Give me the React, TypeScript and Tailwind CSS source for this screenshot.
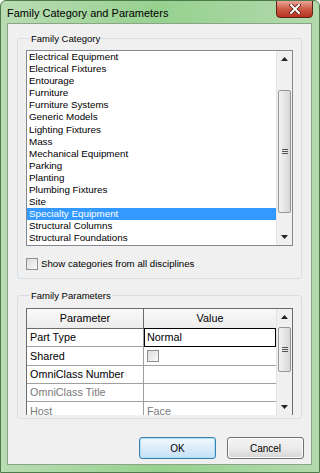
import React from 'react';

const categories = [
  'Electrical Equipment',
  'Electrical Fixtures',
  'Entourage',
  'Furniture',
  'Furniture Systems',
  'Generic Models',
  'Lighting Fixtures',
  'Mass',
  'Mechanical Equipment',
  'Parking',
  'Planting',
  'Plumbing Fixtures',
  'Site',
  'Specialty Equipment',
  'Structural Columns',
  'Structural Foundations',
];

const Arrow = ({ up }: { up?: boolean }) => (
  <svg width="7" height="4" viewBox="0 0 7 4">
    {up ? <path d="M0 4 L3.5 0 L7 4 Z" fill="#222" /> : <path d="M0 0 L3.5 4 L7 0 Z" fill="#222" />}
  </svg>
);

const Grip = () => (
  <div className="flex flex-col gap-[1px] items-center">
    <div className="w-[6px] h-[1px] bg-[#555]" />
    <div className="w-[6px] h-[1px] bg-[#555]" />
    <div className="w-[6px] h-[1px] bg-[#555]" />
  </div>
);

// vertical scrollbar, thumb placed by flex spacers
const ScrollBar = ({ before, thumb }: { before: number; thumb: number }) => (
  <div className="w-[16px] h-full flex flex-col bg-[#f0f0f0] border-l border-[#e3e3e3] shrink-0">
    <div className="h-[16px] flex items-center justify-center shrink-0">
      <Arrow up />
    </div>
    <div className="shrink-0" style={{ height: before }} />
    <div
      className="shrink-0 mx-[1px] rounded-[2px] border border-[#979797] bg-gradient-to-r from-[#f4f4f4] to-[#d6d6d6] flex items-center justify-center"
      style={{ height: thumb }}
    >
      <Grip />
    </div>
    <div className="flex-1" />
    <div className="h-[16px] flex items-center justify-center shrink-0">
      <Arrow />
    </div>
  </div>
);

const Checkbox = () => (
  <div className="w-[12px] h-[12px] border border-[#8f8f8f] bg-gradient-to-br from-[#dcdcdc] to-[#fafafa] shrink-0" />
);

export default function App() {
  return (
    <div
      className="w-[320px] h-[473px] flex flex-col border border-[#4d7a4a] rounded-t-[6px] overflow-hidden bg-gradient-to-r from-[#b9dcb3] via-[#96d18f] to-[#b3d9ad]"
      style={{ fontFamily: '"Liberation Sans", Arial, sans-serif' }}
    >
      {/* title bar */}
      <div className="h-[22px] relative flex items-center pl-[6px] pt-[2px] shrink-0">
        <span className="text-[11px] text-black leading-none">Family Category and Parameters</span>
        <div className="absolute right-[6px] top-[-1px] w-[37px] h-[18px] rounded-b-[4px] border border-[#5e241c] bg-gradient-to-b from-[#e8a597] via-[#cc5a45] to-[#b6321f] flex items-center justify-center">
          <svg width="12" height="10" viewBox="0 0 12 10">
            <path d="M2 1 L10 9 M10 1 L2 9" stroke="#5a1b13" strokeWidth="3.6" strokeLinecap="square" />
            <path d="M2 1 L10 9 M10 1 L2 9" stroke="#ffffff" strokeWidth="2" strokeLinecap="square" />
          </svg>
        </div>
      </div>

      {/* client area */}
      <div className="flex-1 ml-[6px] mr-[7px] mb-[7px] border border-[#8aa487] bg-[#f0f0f0] flex flex-col text-black">
        <fieldset className="mx-[9px] mt-[9px] h-[246px] border border-[#d5dfe5] rounded-[3px] px-[8px] pb-[8px] flex flex-col">
          <legend className="ml-[4px] px-[1px] text-[9.5px] leading-[11px]">Family Category</legend>
          <div className="mt-[6px] h-[196px] border border-[#828790] bg-white flex shrink-0">
            <div className="flex-1 pt-[0px] overflow-hidden">
              {categories.map((c) => (
                <div
                  key={c}
                  className={
                    'h-[12.1px] leading-[12px] pl-[2px] text-[9.8px] whitespace-nowrap ' +
                    (c === 'Specialty Equipment' ? 'bg-[#3399ff] text-white' : '')
                  }
                >
                  {c}
                </div>
              ))}
            </div>
            <ScrollBar before={23} thumb={123} />
          </div>
          <div className="flex items-center gap-[3px] mt-[11px]">
            <Checkbox />
            <span className="text-[9.7px]">Show categories from all disciplines</span>
          </div>
        </fieldset>

        <fieldset className="mx-[9px] mt-[11px] h-[129px] border border-[#d5dfe5] rounded-[3px] px-[8px] flex flex-col">
          <legend className="ml-[4px] px-[1px] text-[9.5px] leading-[11px]">Family Parameters</legend>
          <div className="mt-[7px] h-[107px] border border-[#6b6b6b] border-b-0 bg-white flex overflow-hidden">
            <div className="flex-1 flex flex-col text-[10.8px]">
              <div className="h-[20px] flex shrink-0 bg-gradient-to-b from-[#fafafa] to-[#ececec] border-b border-[#6b6b6b]">
                <div className="w-[117px] border-r border-[#6b6b6b] flex items-center justify-center">Parameter</div>
                <div className="flex-1 flex items-center justify-center">Value</div>
              </div>
              <div className="h-[18px] flex shrink-0 border-b border-[#a0a0a0]">
                <div className="w-[117px] border-r border-[#a0a0a0] flex items-center pl-[3px]">Part Type</div>
                <div className="flex-1 border border-black -mt-[1px] -mb-[1px] flex items-center pl-[2px]">Normal</div>
              </div>
              <div className="h-[19px] flex shrink-0 border-b border-[#a0a0a0]">
                <div className="w-[117px] border-r border-[#a0a0a0] flex items-center pl-[3px]">Shared</div>
                <div className="flex-1 flex items-center pl-[3px]">
                  <Checkbox />
                </div>
              </div>
              <div className="h-[18px] flex shrink-0 border-b border-[#a0a0a0]">
                <div className="w-[117px] border-r border-[#a0a0a0] flex items-center pl-[3px]">OmniClass Number</div>
                <div className="flex-1" />
              </div>
              <div className="h-[18px] flex shrink-0 border-b border-[#a0a0a0] text-[#7a7a7a]">
                <div className="w-[117px] border-r border-[#a0a0a0] flex items-center pl-[3px]">OmniClass Title</div>
                <div className="flex-1" />
              </div>
              <div className="h-[18px] flex shrink-0 text-[#7a7a7a]">
                <div className="w-[117px] border-r border-[#a0a0a0] flex items-center pl-[3px]">Host</div>
                <div className="flex-1 flex items-center pl-[3px]">Face</div>
              </div>
            </div>
            <ScrollBar before={2} thumb={45} />
          </div>
        </fieldset>

        <div className="flex justify-end gap-[11px] mr-[7px] mt-[18px] text-[10px]">
          <button className="w-[77px] h-[22px] rounded-[3px] border border-[#3c7fb1] bg-gradient-to-b from-[#f2f9fd] via-[#dcecfa] to-[#c4e0f5] shadow-[inset_0_0_0_1px_#aee0f8]">
            OK
          </button>
          <button className="w-[77px] h-[22px] rounded-[3px] border border-[#707070] bg-gradient-to-b from-[#f3f3f3] via-[#ebebeb] to-[#d6d6d6] shadow-[inset_0_0_0_1px_#fcfcfc]">
            Cancel
          </button>
        </div>
      </div>
    </div>
  );
}
